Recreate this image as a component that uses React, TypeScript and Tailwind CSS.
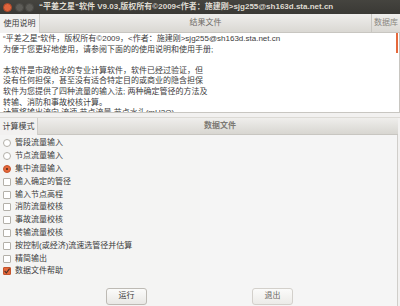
import React from "react";

const options = [
  { label: "管段流量输入", kind: "radio", on: false },
  { label: "节点流量输入", kind: "radio", on: false },
  { label: "集中流量输入", kind: "radio", on: true },
  { label: "输入确定的管径", kind: "check", on: false },
  { label: "输入节点高程", kind: "check", on: false },
  { label: "消防流量校核", kind: "check", on: false },
  { label: "事故流量校核", kind: "check", on: false },
  { label: "转输流量校核", kind: "check", on: false },
  { label: "按控制(或经济)流速选管径并估算", kind: "check", on: false },
  { label: "精简输出", kind: "check", on: false },
  { label: "数据文件帮助", kind: "check", on: true },
];

const helpLines = [
  "“平差之星”软件，版权所有©2009，<作者：施建刚>sjg255@sh163d.sta.net.cn",
  "为便于您更好地使用，请参阅下面的的使用说明和使用手册;",
  "",
  "本软件是市政给水的专业计算软件，软件已经过验证，但",
  "没有任何担保，甚至没有适合特定目的或商业的隐含担保",
  "软件为您提供了四种流量的输入法; 两种确定管径的方法及",
  "转输、消防和事故校核计算。",
  "计算将输出流向,流速,节点流量,节点水头(mH2O)",
];

const Mark: React.FC<{ kind: string; on: boolean }> = ({ kind, on }) => {
  if (kind === "radio") {
    return on ? (
      <span className="w-[8px] h-[8px] shrink-0 rounded-full bg-[#e5683b] border border-[#c4542c] flex items-center justify-center">
        <span className="w-[2px] h-[2px] rounded-full bg-[#3c2a22]" />
      </span>
    ) : (
      <span className="w-[8px] h-[8px] shrink-0 rounded-full bg-white border border-[#b3b0a9]" />
    );
  }
  return on ? (
    <span className="w-[8px] h-[8px] shrink-0 rounded-[1px] bg-[#e5683b] border border-[#c4542c] flex items-center justify-center">
      <svg width="6" height="6" viewBox="0 0 6 6">
        <path d="M0.6 3 L2.4 4.9 L5.6 0.6" stroke="#4a3128" strokeWidth="1.1" fill="none" />
      </svg>
    </span>
  ) : (
    <span className="w-[8px] h-[8px] shrink-0 rounded-[1px] bg-white border border-[#b3b0a9]" />
  );
};

const App: React.FC = () => {
  return (
    <div
      className="w-[400px] h-[306px] bg-[#f2f1f0] flex flex-col overflow-hidden text-[#3c3c3c]"
      style={{ fontFamily: '"Liberation Sans", "Noto Sans CJK SC", sans-serif' }}
    >
      {/* title bar */}
      <div className="h-[14px] bg-gradient-to-b from-[#45443f] to-[#3a3935] flex items-center pl-[3px] shrink-0">
        <span className="w-[9px] h-[9px] rounded-full bg-[#e0643c] border border-[#a9482a]" />
        <span className="w-[9px] h-[9px] rounded-full bg-[#5d5c57] border border-[#4a4945] ml-[3px]" />
        <span className="w-[9px] h-[9px] rounded-full bg-[#5d5c57] border border-[#4a4945] ml-[1px]" />
        <span className="ml-[5px] text-[8px] font-bold text-[#dfdbd2] whitespace-nowrap leading-none">
          “平差之星”软件 V9.03,版权所有©2009&lt;作者：施建刚&gt;sjg255@sh163d.sta.net.cn
        </span>
      </div>

      {/* top notebook */}
      <div className="h-[19px] flex shrink-0 text-[8px] leading-none">
        <div className="w-[40px] bg-[#f2f1f0] border-r border-[#cfcdc8] flex items-center justify-center">
          使用说明
        </div>
        <div className="flex-1 bg-gradient-to-b from-[#efeeec] to-[#dad8d3] border-b border-[#c8c6c1] flex items-center justify-center text-[#6f6c66]">
          结果文件
        </div>
        <div className="w-[29px] bg-gradient-to-b from-[#efeeec] to-[#dad8d3] border-b border-l border-[#c8c6c1] flex items-center justify-center text-[#8a8780]">
          数据库
        </div>
      </div>
      <div className="h-[80px] bg-white border-b border-r border-[#c8c6c1] flex shrink-0 overflow-hidden">
        <div className="flex-1 pl-[3px] pt-[1px] text-[8px] leading-[10.6px] whitespace-nowrap overflow-hidden">
          {helpLines.map((l, i) => (
            <div key={i} className="h-[10.6px]">{l}</div>
          ))}
        </div>
        <div className="w-[2px] h-[20px] bg-[#e5683b] mr-[1px]" />
      </div>

      {/* pane gap */}
      <div className="h-[5px] border-b border-[#dcdad5] shrink-0" />

      {/* bottom notebook */}
      <div className="h-[17px] flex shrink-0 text-[8px] leading-none">
        <div className="w-[38px] bg-[#f2f1f0] border-r border-[#cfcdc8] flex items-center justify-center">
          计算模式
        </div>
        <div className="w-[162px] bg-gradient-to-b from-[#efeeec] to-[#dad8d3] border-b border-[#c8c6c1]" />
        <div className="flex-1 mr-[2px] bg-gradient-to-b from-[#efeeec] to-[#d8d6d1] border-b border-[#c8c6c1] flex items-center pl-[4px] text-[#7c7973] font-bold">
          数据文件
        </div>
      </div>
      <div className="flex-1 flex min-h-0">
        <div className="w-[200px] flex flex-col pt-[2px] bg-[#f4f4f3]">
          {options.map((o) => (
            <div key={o.label} className="h-[12.8px] flex items-center pl-[3px] gap-[4px] text-[8px] leading-none whitespace-nowrap">
              <Mark kind={o.kind} on={o.on} />
              <span>{o.label}</span>
            </div>
          ))}
          <div className="mt-auto mb-[1px] ml-[106px]">
            <button className="w-[41px] h-[17px] rounded-[3px] border border-[#bdbab4] bg-gradient-to-b from-[#fbfbfa] to-[#e9e8e5] text-[8px] leading-none text-[#3c3c3c]">
              运行
            </button>
          </div>
        </div>
        <div className="flex-1 mr-[2px] bg-[#f5f5f5] border-r border-[#d0ceca] flex flex-col">
          <div className="mt-auto mb-[1px] ml-[52px]">
            <button className="w-[41px] h-[17px] rounded-[3px] border border-[#d3d0cb] bg-gradient-to-b from-[#fbfbfa] to-[#ecebe8] text-[8px] leading-none text-[#6a6762]">
              退出
            </button>
          </div>
        </div>
      </div>
    </div>
  );
};

export default App;
